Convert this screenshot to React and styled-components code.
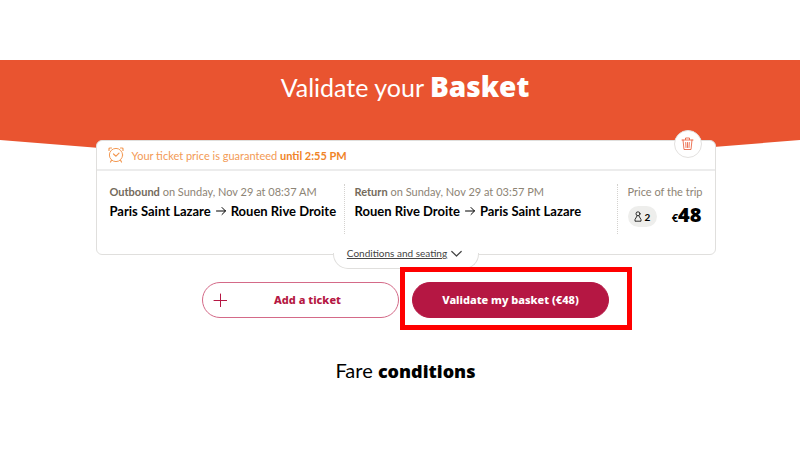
import React from "react";
import styled, { createGlobalStyle } from "styled-components";

const GlobalStyle = createGlobalStyle`
  *, *::before, *::after { box-sizing: border-box; }
  body { margin: 0; background: #fff; color: #000; font-family: Lato, "Open Sans", sans-serif; }
  button { font: inherit; color: inherit; cursor: pointer; }
  h1, h2, h3, p { margin: 0; font-weight: 400; }
`;

const Page = styled.div`
  padding: 60px 0;
`;

const Hero = styled.header`
  height: 112px;
  padding: 9px 0 0 10px;
  background: #e95430;
  color: #fff;
  text-align: center;
  clip-path: polygon(0 0, 100% 0, 100% 80px, 50% 100%, 0 80px);
`;

const Title = styled.h1`
  font-size: 25px;
  line-height: 34px;
  font-weight: 400;

  strong { font-family: "Noto Sans", sans-serif; font-size: 28px; font-weight: 900; }
`;

const Content = styled.main`
  display: flex;
  flex-direction: column;
  align-items: center;
  padding-left: 11px;
  margin-top: -32px;
`;

const Card = styled.section`
  position: relative;
  width: 78%;
  min-width: 620px;
  max-width: 960px;
  border: 1px solid #e0dfdd;
  border-radius: 6px;
  background: #fff;
`;

const Notice = styled.p`
  display: flex;
  align-items: center;
  gap: 8px;
  height: 30px;
  padding: 0 11px;
  border-bottom: 2px solid #ececec;
  color: #f39a55;
  font-size: 11px;

  strong { color: #f08427; font-weight: 700; }
`;

const DeleteButton = styled.button`
  position: absolute;
  top: -11px;
  right: 13px;
  display: grid;
  place-items: center;
  width: 28px;
  height: 28px;
  padding: 0;
  border: 1px solid #e3e1df;
  border-radius: 50%;
  background: #fff;
  color: #e95430;
`;

const Trip = styled.div`
  display: grid;
  grid-template-columns: 247px 1fr 98px;
  padding-top: 13px;
`;

const Leg = styled.div`
  height: 50px;
  padding-left: ${(p) => (p.$first ? "13px" : "10px")};
  border-left: ${(p) => (p.$first ? "0" : "1px dotted #d4d2cf")};
  white-space: nowrap;
`;

const Caption = styled.p`
  color: #8d8475;
  font-size: 11px;
  line-height: 16px;

  strong { color: #746a5b; font-weight: 700; }
`;

const Route = styled.h3`
  display: flex;
  align-items: center;
  gap: 5px;
  font-size: 13px;
  line-height: 22px;
  font-weight: 700;
`;

const PriceRow = styled.div`
  display: flex;
  align-items: center;
  justify-content: space-between;
  padding: 4px 13px 0 0;
`;

const Passengers = styled.span`
  display: flex;
  align-items: center;
  justify-content: center;
  gap: 3px;
  width: 29px;
  height: 21px;
  border-radius: 11px;
  background: #eeeeec;
  font-size: 10px;
  font-weight: 700;
`;

const Price = styled.strong`
  font: 900 20px/22px "Noto Sans", sans-serif;

  small { font-size: 11px; font-weight: 700; }
`;

const ConditionsTab = styled.button`
  position: relative;
  z-index: 0;
  display: flex;
  justify-content: center;
  gap: 4px;
  width: 146px;
  height: 30px;
  margin: 5px auto -15px;
  padding: 7px 2px 0 0;
  border: 0;
  background: none;
  color: #444;
  font-size: 10px;
  line-height: 14px;

  span { text-decoration: underline; }

  &::before {
    content: "";
    position: absolute;
    z-index: -1;
    inset: 14px 0 0;
    border: 1px solid #e0dfdd;
    border-top: 0;
    border-radius: 0 0 15px 15px;
    background: #fff;
  }
`;

const Actions = styled.div`
  display: flex;
  gap: 13px;
  margin-top: 27px;
`;

const ActionButton = styled.button`
  display: grid;
  grid-template-columns: ${(p) => (p.$filled ? "1fr" : "34px 1fr 20px")};
  align-items: center;
  width: 197px;
  height: 36px;
  padding: 0 10px;
  border: 1px solid ${(p) => (p.$filled ? "#b51743" : "#d46a88")};
  border-radius: 18px;
  background: ${(p) => (p.$filled ? "#b51743" : "#fff")};
  color: ${(p) => (p.$filled ? "#fff" : "#b51743")};
  font: 800 11px/16px "Noto Sans", sans-serif;
  white-space: nowrap;
`;

const Highlight = styled.div`
  position: relative;

  &::after {
    content: "";
    position: absolute;
    inset: -15px -23px -12px -12px;
    border: 5px solid #f00;
    pointer-events: none;
  }
`;

const FareTitle = styled.h2`
  margin-top: 38px;
  font-size: 20px;
  line-height: 28px;

  strong { font-family: "Noto Sans", sans-serif; font-size: 18px; font-weight: 900; }
`;

const Icon = styled.svg`
  flex: none;
  fill: none;
  stroke: currentColor;
  stroke-linecap: round;
  stroke-linejoin: round;
`;

const ClockIcon = () => (
  <Icon width="16" height="16" viewBox="0 0 16 16" aria-hidden="true">
    <circle cx="8" cy="8" r="6.600" />
    <path d="M5.500 7 8 9.200l3-3M3.500 13.200 2.500 15M12.500 13.200 13.500 15M1 3.500V2Q1 1 2 1h1.500M15 3.500V2Q15 1 14 1h-1.500" strokeWidth="1.200" />
  </Icon>
);

const TrashIcon = () => (
  <Icon width="13" height="14" viewBox="0 0 13 14" aria-hidden="true">
    <path d="M1 3h11M2 3l1 9.500h7L11 3M4.500 2.500V1h4v1.500M4.700 5.500l.3 5M6.500 5.500v5M8.300 5.500l-.3 5" strokeWidth=".8" />
  </Icon>
);

const ArrowIcon = () => (
  <Icon width="10" height="10" viewBox="0 0 10 10" role="img" aria-label="to">
    <path d="M.5 5h9M6 1.500 9.500 5 6 8.500" />
  </Icon>
);

const PersonIcon = () => (
  <Icon width="8" height="11" viewBox="0 0 8 11" aria-hidden="true">
    <circle cx="4" cy="2.800" r="2" strokeWidth=".8" />
    <path d="M3 5 1 8.500v1.700h6V8.500L5 5" strokeWidth=".8" />
  </Icon>
);

const PlusIcon = () => (
  <Icon width="14" height="14" viewBox="0 0 14 14" aria-hidden="true">
    <path d="M7.500 1v13M1 7.500h13" />
  </Icon>
);

const ChevronIcon = () => (
  <Icon width="11" height="14" viewBox="0 0 11 14" aria-hidden="true">
    <path d="m.8 5.500 4.700 4.500 4.700-4.500" strokeWidth="1.200" />
  </Icon>
);

const legs = [
  { label: "Outbound", when: "on Sunday, Nov 29 at 08:37 AM", from: "Paris Saint Lazare", to: "Rouen Rive Droite" },
  { label: "Return", when: "on Sunday, Nov 29 at 03:57 PM", from: "Rouen Rive Droite", to: "Paris Saint Lazare" },
];

export default function App() {
  return (
    <Page>
      <GlobalStyle />
      <Hero>
        <Title>Validate your <strong>Basket</strong></Title>
      </Hero>
      <Content>
        <Card>
          <Notice>
            <ClockIcon />
            <span>Your ticket price is guaranteed <strong>until 2:55 PM</strong></span>
          </Notice>
          <DeleteButton type="button" aria-label="Delete"><TrashIcon /></DeleteButton>
          <Trip>
            {legs.map((leg, i) => (
              <Leg key={leg.label} $first={i === 0}>
                <Caption><strong>{leg.label}</strong> {leg.when}</Caption>
                <Route><span>{leg.from}</span><ArrowIcon /><span>{leg.to}</span></Route>
              </Leg>
            ))}
            <Leg>
              <Caption>Price of the trip</Caption>
              <PriceRow>
                <Passengers><PersonIcon />2</Passengers>
                <Price><small>€</small>48</Price>
              </PriceRow>
            </Leg>
          </Trip>
          <ConditionsTab type="button"><span>Conditions and seating</span><ChevronIcon /></ConditionsTab>
        </Card>
        <Actions>
          <ActionButton type="button"><PlusIcon /><span>Add a ticket</span></ActionButton>
          <Highlight>
            <ActionButton type="button" $filled><span>Validate my basket (€48)</span></ActionButton>
          </Highlight>
        </Actions>
        <FareTitle>Fare <strong>conditions</strong></FareTitle>
      </Content>
    </Page>
  );
}
